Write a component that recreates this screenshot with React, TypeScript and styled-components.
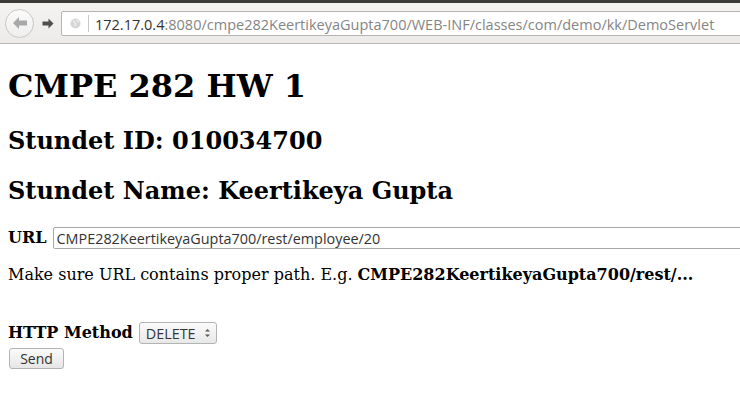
import React from "react";
import styled, { createGlobalStyle } from "styled-components";

const GlobalStyle = createGlobalStyle`
  html, body { margin: 0; padding: 0; background: #ffffff; }
  body { font-family: "DejaVu Serif", serif; font-size: 16px; color: #000; }
`;

const Chrome = styled.div`
  display: flex;
  flex-direction: column;
`;

const TopStrip = styled.div`
  height: 3px;
  background: #3c3b37;
`;

const Toolbar = styled.div`
  height: 40px;
  display: flex;
  align-items: center;
  padding-left: 5px;
  background: linear-gradient(#f4f3f2, #ecebea);
  border-bottom: 1px solid #b9b8b6;
  overflow: hidden;
`;

const BackButton = styled.div`
  width: 27px;
  height: 27px;
  border-radius: 50%;
  border: 1px solid #c8c7c5;
  background: linear-gradient(#fbfbfb, #eeeeee);
  display: flex;
  align-items: center;
  justify-content: center;
  flex: none;
`;

const ForwardButton = styled.div`
  width: 20px;
  height: 24px;
  margin-left: 4px;
  margin-right: 3px;
  display: flex;
  align-items: center;
  justify-content: center;
  flex: none;
`;

const AddressBar = styled.div`
  flex: none;
  width: 720px;
  height: 23px;
  border: 1px solid #b5b4b2;
  border-radius: 2px;
  background: #ffffff;
  display: flex;
  align-items: center;
  margin-top: 1px;
`;

const SiteIcon = styled.div`
  width: 26px;
  display: flex;
  align-items: center;
  justify-content: center;
  flex: none;
`;

const Separator = styled.div`
  width: 1px;
  height: 17px;
  background: #c9c9c9;
  margin-right: 6px;
  flex: none;
`;

const AddressText = styled.div`
  font-family: "Open Sans", "Noto Sans", sans-serif;
  font-size: 14.5px;
  color: #858585;
  white-space: nowrap;
  padding-top: 1px;
`;

const Host = styled.span`
  color: #333333;
`;

const Page = styled.div`
  padding: 0 8px;
`;

const Title = styled.h1`
  margin: 23px 0 0;
  font-size: 32px;
  line-height: 38px;
  font-weight: bold;
`;

const SubTitle = styled.h2`
  margin: 22px 0 0;
  font-size: 24px;
  line-height: 28px;
  font-weight: bold;
`;

const FieldRow = styled.div<{ $top: number }>`
  display: flex;
  align-items: center;
  height: 22px;
  margin-top: ${(p) => p.$top}px;
  gap: 6px;
`;

const Label = styled.label`
  font-weight: bold;
  line-height: 22px;
  white-space: nowrap;
`;

const TextInput = styled.input`
  box-sizing: border-box;
  flex: none;
  width: 720px;
  height: 22px;
  border: 1px solid #a9a9a9;
  border-radius: 2px;
  padding: 0 3px;
  font-family: "Open Sans", "Noto Sans", sans-serif;
  font-size: 14.4px;
  color: #333333;
  background: #ffffff;
  outline: none;
`;

const Hint = styled.p`
  margin: 16px 0 0;
  line-height: 19px;
  white-space: nowrap;
`;

const SelectWrap = styled.div`
  position: relative;
  flex: none;
`;

const MethodSelect = styled.select`
  appearance: none;
  box-sizing: border-box;
  width: 78px;
  height: 22px;
  border: 1px solid #b3b3b3;
  border-radius: 3px;
  background: linear-gradient(#fbfbfb, #e8e8e8);
  padding: 0 0 0 6px;
  font-family: "Open Sans", "Noto Sans", sans-serif;
  font-size: 14.4px;
  color: #333333;
  outline: none;
`;

const SelectArrows = styled.svg`
  position: absolute;
  right: 6px;
  top: 5px;
  pointer-events: none;
`;

const SendButton = styled.button`
  box-sizing: border-box;
  display: block;
  margin: 4px 0 0 1px;
  width: 55px;
  height: 21px;
  border: 1px solid #b3b3b3;
  border-radius: 3px;
  background: linear-gradient(#fbfbfb, #e6e6e6);
  font-family: "Open Sans", "Noto Sans", sans-serif;
  font-size: 14px;
  color: #333333;
  padding: 0;
`;

export default function App() {
  return (
    <>
      <GlobalStyle />
      <Chrome>
        <TopStrip />
        <Toolbar>
          <BackButton>
            <svg width="16" height="14" viewBox="0 0 16 14">
              <path d="M1 7 L7 1 L7 4.5 L15 4.5 L15 9.5 L7 9.5 L7 13 Z" fill="#a8a8a8" />
            </svg>
          </BackButton>
          <ForwardButton>
            <svg width="12" height="11" viewBox="0 0 12 11">
              <path d="M11.5 5.5 L6.5 0.5 L6.5 3.5 L0.5 3.5 L0.5 7.5 L6.5 7.5 L6.5 10.5 Z" fill="#4f4f4f" />
            </svg>
          </ForwardButton>
          <AddressBar>
            <SiteIcon>
              <svg width="11" height="11" viewBox="0 0 11 11">
                <circle cx="5.5" cy="5.5" r="5" fill="#d6d6d6" />
                <path d="M3 2.5 C4.5 3 4 4.5 5 5 C6 5.5 5.5 7 4.5 8 M7 1.5 C6.5 3 8 3.5 9.5 4" stroke="#f2f2f2" strokeWidth="1.2" fill="none" />
              </svg>
            </SiteIcon>
            <Separator />
            <AddressText>
              <Host>172.17.0.4</Host>:8080/cmpe282KeertikeyaGupta700/WEB-INF/classes/com/demo/kk/DemoServlet
            </AddressText>
          </AddressBar>
        </Toolbar>
      </Chrome>
      <Page>
        <Title>CMPE 282 HW 1</Title>
        <SubTitle>Stundet ID: 010034700</SubTitle>
        <SubTitle>Stundet Name: Keertikeya Gupta</SubTitle>
        <FieldRow $top={22}>
          <Label htmlFor="url">URL</Label>
          <TextInput id="url" defaultValue="CMPE282KeertikeyaGupta700/rest/employee/20" />
        </FieldRow>
        <Hint>
          Make sure URL contains proper path. E.g. <b>CMPE282KeertikeyaGupta700/rest/...</b>
        </Hint>
        <FieldRow $top={38}>
          <Label htmlFor="method">HTTP Method</Label>
          <SelectWrap>
            <MethodSelect id="method" defaultValue="DELETE">
              <option>GET</option>
              <option>POST</option>
              <option>PUT</option>
              <option>DELETE</option>
            </MethodSelect>
            <SelectArrows width="7" height="12" viewBox="0 0 7 12">
              <path d="M1 4.5 L3.5 2 L6 4.5 Z" fill="#555" />
              <path d="M1 7.5 L3.5 10 L6 7.5 Z" fill="#555" />
            </SelectArrows>
          </SelectWrap>
        </FieldRow>
        <SendButton>Send</SendButton>
      </Page>
    </>
  );
}
